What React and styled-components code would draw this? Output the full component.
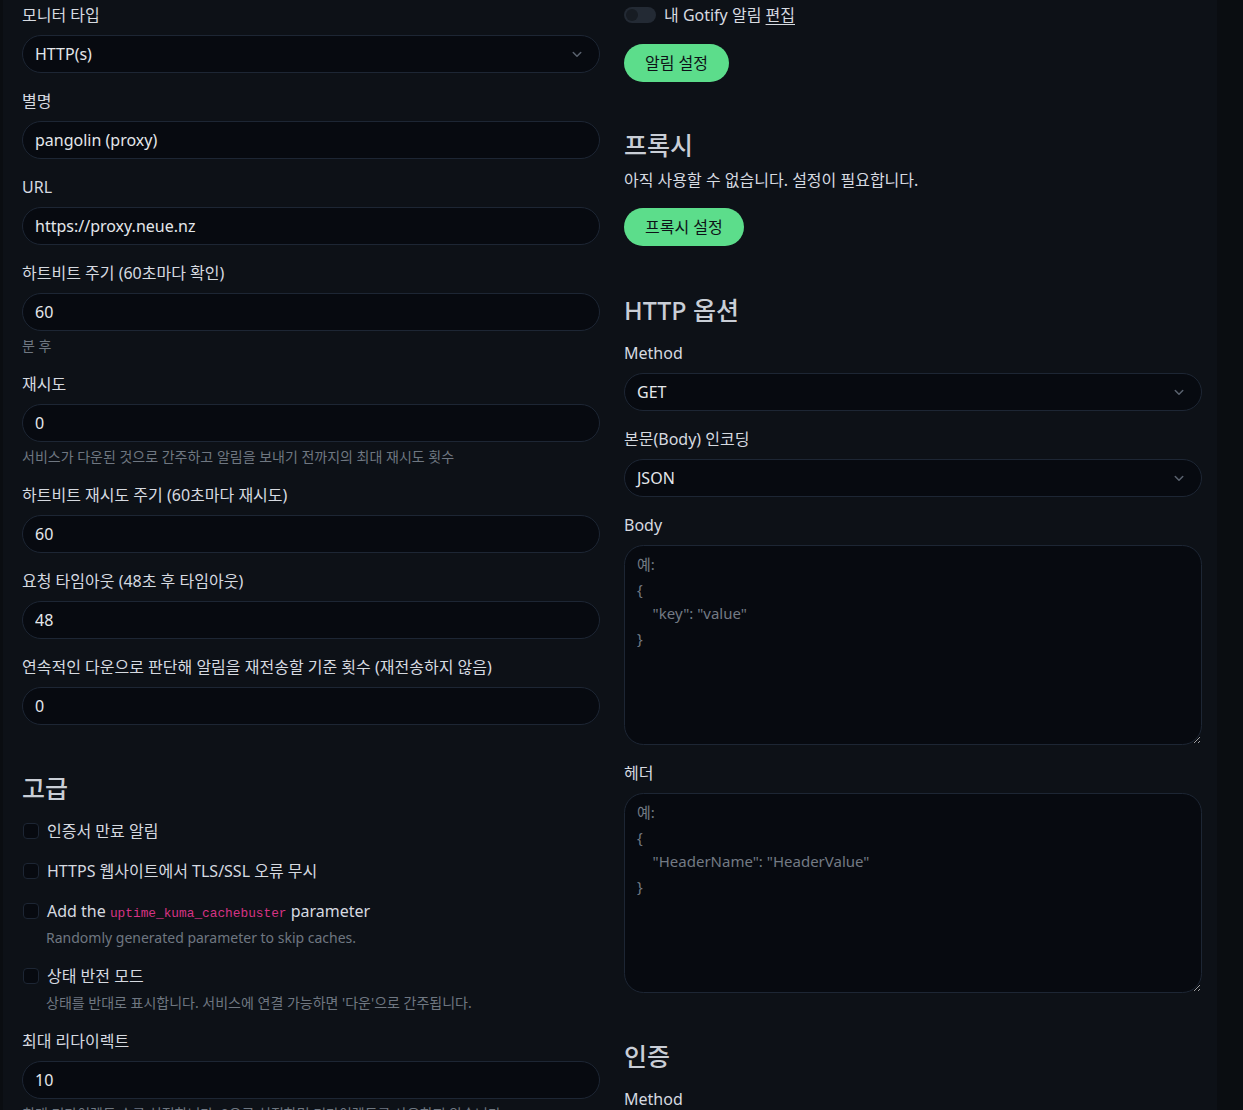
import React from 'react';
import styled, { createGlobalStyle } from 'styled-components';

const GlobalStyle = createGlobalStyle`
  html, body {
    margin: 0;
    padding: 0;
    background: #0a0d11;
  }
  body {
    font-family: "Noto Sans", "Noto Sans CJK KR", sans-serif;
    font-size: 16px;
    line-height: 1.5;
    color: #d6dae0;
  }
  * { box-sizing: border-box; }
`;

const Shell = styled.div`
  display: flex;
  height: 1110px;
  overflow: hidden;
`;

const Card = styled.div`
  margin-left: 3px;
  width: 1214px;
  background: #0d1117;
  padding: 3px 0 0 19px;
  display: grid;
  grid-template-columns: 578px 578px;
  column-gap: 24px;
  align-items: start;
`;

const Column = styled.div`
  display: block;
  & > *:first-child { margin-top: 0; }
`;

const Group = styled.div`
  margin: 16px 0;
`;

const Label = styled.label`
  display: block;
  margin-bottom: 8px;
  color: #d6dae0;
`;

const Input = styled.input`
  display: block;
  width: 100%;
  height: 38px;
  padding: 6px 12px;
  font: inherit;
  color: #e4e7eb;
  background: #070a10;
  border: 1px solid #1d2634;
  border-radius: 19.5px;
  outline: none;
`;

const SelectBox = styled.div`
  display: flex;
  align-items: center;
  justify-content: space-between;
  height: 38px;
  padding: 6px 16px 6px 12px;
  color: #e4e7eb;
  background: #070a10;
  border: 1px solid #1d2634;
  border-radius: 19.5px;
`;

const Hint = styled.div`
  margin-top: 4px;
  font-size: 14px;
  line-height: 21px;
  color: #6f7781;
`;

const Heading = styled.h2`
  margin: ${(p) => (p.$afterButton ? '49px' : '48px')} 0 8px;
  font-size: 25px;
  line-height: 30px;
  font-weight: 500;
  color: #c9ced6;
`;

const CheckRow = styled.div`
  margin: 16px 0;
  padding-left: 24px;
`;

const CheckLine = styled.div`
  display: flex;
  align-items: center;
  height: 24px;
  margin-left: -24px;
  gap: 8px;
`;

const Box = styled.span`
  width: 16px;
  height: 16px;
  margin-left: 1px;
  border: 1px solid #1d2634;
  border-radius: 4px;
  background: #070a10;
  flex-shrink: 0;
`;

const CheckText = styled.span`
  color: #d6dae0;
`;

const Code = styled.code`
  font-family: "Liberation Mono", monospace;
  font-size: 12.8px;
  color: #d63384;
`;

const SwitchRow = styled.div`
  display: flex;
  align-items: center;
  gap: 8px;
  height: 24px;
  margin-bottom: 17px;
`;

const Switch = styled.span`
  display: inline-flex;
  align-items: center;
  width: 32px;
  height: 16px;
  padding: 0 2px;
  border-radius: 8px;
  background: #232a34;
  &::after {
    content: '';
    width: 12px;
    height: 12px;
    border-radius: 50%;
    background: #171c23;
  }
`;

const Link = styled.span`
  text-decoration: underline;
  text-underline-offset: 3px;
`;

const Button = styled.button`
  display: inline-block;
  height: 38px;
  padding: 0 21px;
  font: inherit;
  color: #0d1117;
  background: #5cdd8b;
  border: none;
  border-radius: 19px;
`;

const Para = styled.p`
  margin: 0 0 16px;
  color: #d6dae0;
`;

const TextArea = styled.textarea`
  display: block;
  width: 100%;
  height: 200px;
  padding: 6px 12px;
  font: inherit;
  font-size: 15px;
  line-height: 24.5px;
  color: #e4e7eb;
  background: #070a10;
  border: 1px solid #1d2634;
  border-radius: 19.5px;
  resize: vertical;
  outline: none;
  &::placeholder {
    color: #737a84;
  }
`;

const Chevron = () => (
  <svg width="12" height="12" viewBox="0 0 16 16" fill="none" stroke="#5a626e" strokeWidth="2" strokeLinecap="round" strokeLinejoin="round">
    <path d="M3 6l5 5 5-5" />
  </svg>
);

const Field = ({ label, value, hint }) => (
  <Group>
    <Label>{label}</Label>
    <Input readOnly value={value} />
    {hint && <Hint>{hint}</Hint>}
  </Group>
);

const SelectField = ({ label, value }) => (
  <Group>
    <Label>{label}</Label>
    <SelectBox>
      <span>{value}</span>
      <Chevron />
    </SelectBox>
  </Group>
);

const Check = ({ children, hint }) => (
  <CheckRow>
    <CheckLine>
      <Box />
      <CheckText>{children}</CheckText>
    </CheckLine>
    {hint && <Hint>{hint}</Hint>}
  </CheckRow>
);

const App = () => (
  <>
    <GlobalStyle />
    <Shell>
      <Card>
        <Column>
          <SelectField label="모니터 타입" value="HTTP(s)" />
          <Field label="별명" value="pangolin (proxy)" />
          <Field label="URL" value="https://proxy.neue.nz" />
          <Field label="하트비트 주기 (60초마다 확인)" value="60" hint="분 후" />
          <Field label="재시도" value="0" hint="서비스가 다운된 것으로 간주하고 알림을 보내기 전까지의 최대 재시도 횟수" />
          <Field label="하트비트 재시도 주기 (60초마다 재시도)" value="60" />
          <Field label="요청 타임아웃 (48초 후 타임아웃)" value="48" />
          <Field label="연속적인 다운으로 판단해 알림을 재전송할 기준 횟수 (재전송하지 않음)" value="0" />

          <Heading>고급</Heading>
          <Check>인증서 만료 알림</Check>
          <Check>HTTPS 웹사이트에서 TLS/SSL 오류 무시</Check>
          <Check hint="Randomly generated parameter to skip caches.">
            Add the <Code>uptime_kuma_cachebuster</Code> parameter
          </Check>
          <Check hint="상태를 반대로 표시합니다. 서비스에 연결 가능하면 '다운'으로 간주됩니다.">상태 반전 모드</Check>
          <Field label="최대 리다이렉트" value="10" hint="최대 리다이렉트 수를 설정합니다. 0으로 설정하면 리다이렉트를 사용하지 않습니다." />
        </Column>

        <Column>
          <SwitchRow>
            <Switch />
            <CheckText>내 Gotify 알림 <Link>편집</Link></CheckText>
          </SwitchRow>
          <Button>알림 설정</Button>

          <Heading>프록시</Heading>
          <Para>아직 사용할 수 없습니다. 설정이 필요합니다.</Para>
          <Button>프록시 설정</Button>

          <Heading $afterButton>HTTP 옵션</Heading>
          <SelectField label="Method" value="GET" />
          <SelectField label="본문(Body) 인코딩" value="JSON" />
          <Group>
            <Label>Body</Label>
            <TextArea placeholder={'예:\n{\n    "key": "value"\n}'} />
          </Group>
          <Group>
            <Label>헤더</Label>
            <TextArea placeholder={'예:\n{\n    "HeaderName": "HeaderValue"\n}'} />
          </Group>

          <Heading>인증</Heading>
          <Group>
            <Label>Method</Label>
          </Group>
        </Column>
      </Card>
    </Shell>
  </>
);

export default App;
